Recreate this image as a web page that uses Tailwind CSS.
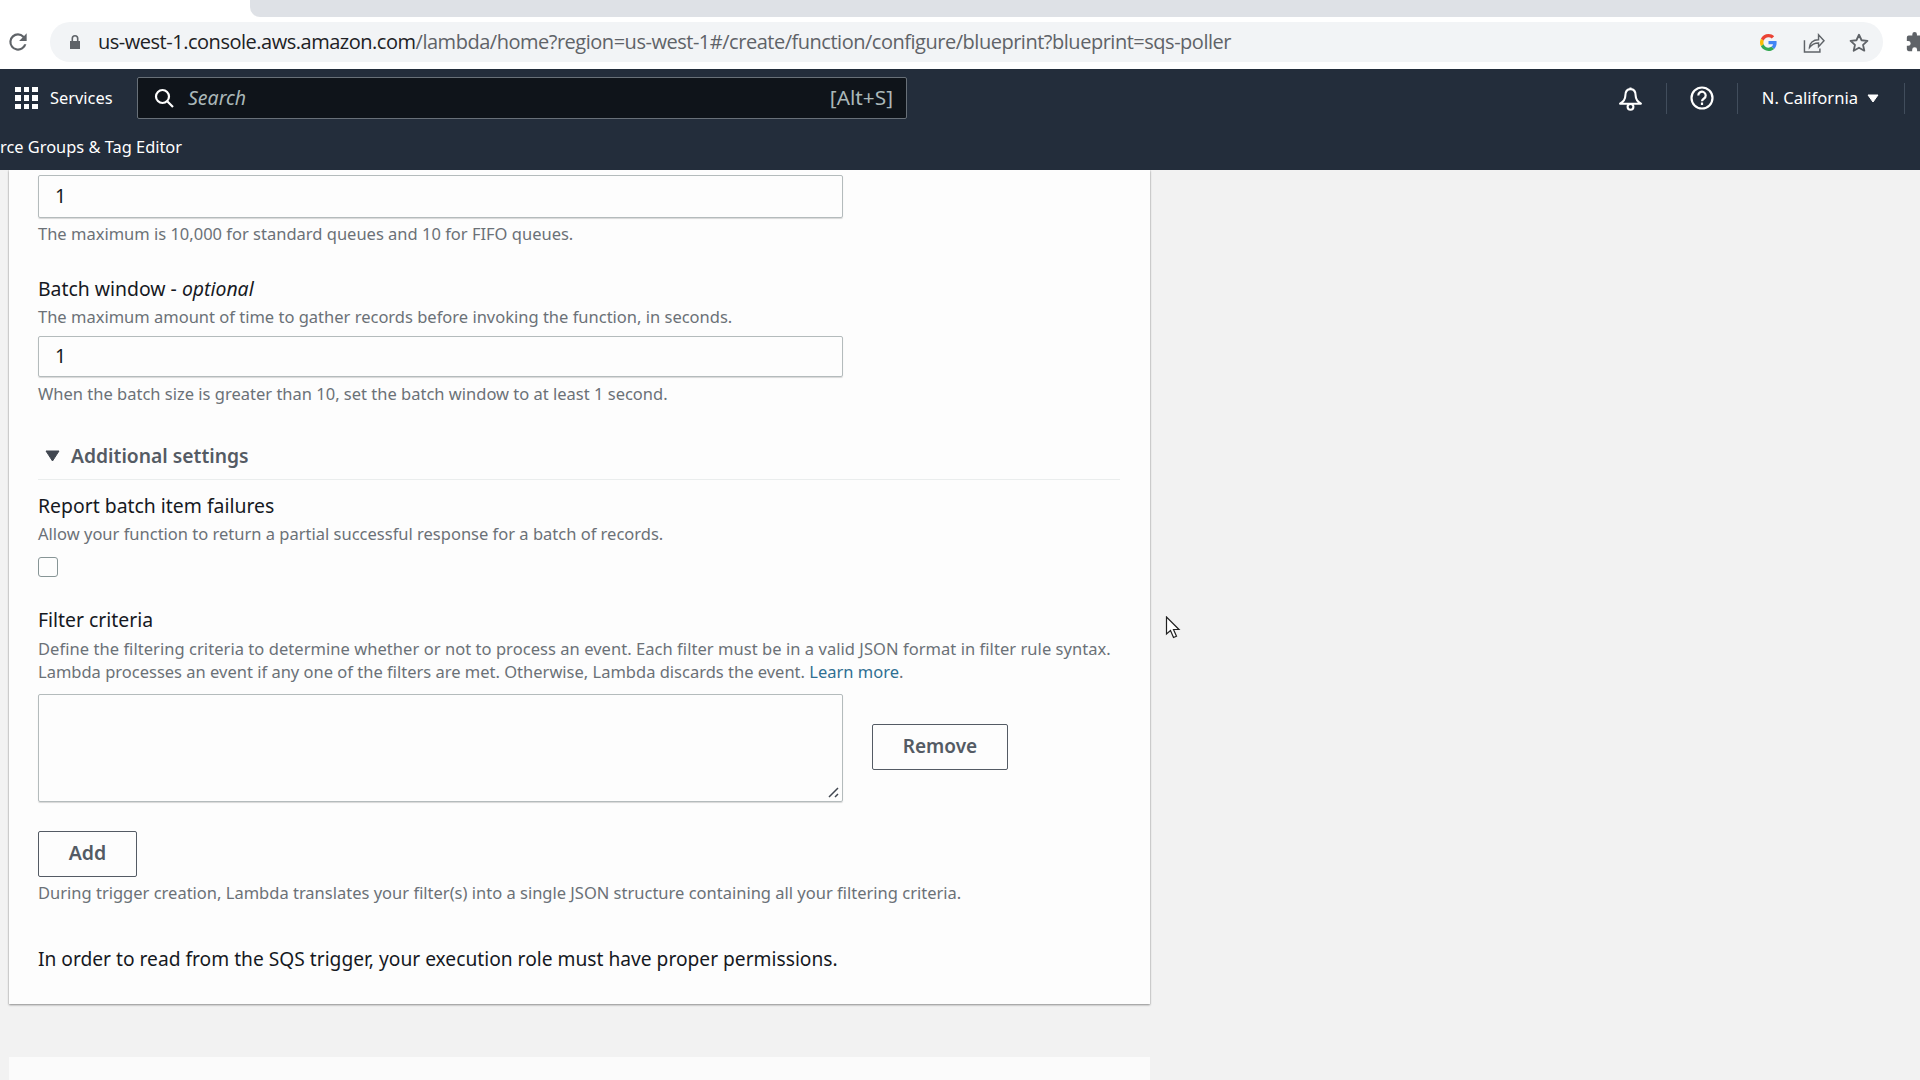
<!DOCTYPE html>
<html lang="en">
<head>
    <meta charset="UTF-8">
    <title>Create function - Lambda</title>
    <script src="https://cdn.jsdelivr.net/npm/@tailwindcss/browser@4"></script>
</head>
<body class="bg-[#f2f2f2] font-['Noto_Sans',sans-serif] text-[#16191f]">
<div class="relative h-[1080px] w-[1920px] overflow-hidden">
    <!-- Browser toolbar -->
    <div class="h-[69px] bg-white relative">
        <div class="h-[17px] ml-[250px] bg-[#dee1e6] rounded-bl-[10px]"></div>
        <div class="h-[52px] flex items-center">
            <svg class="w-[26px] h-[26px] ml-[5px] -mt-[2px]" viewBox="0 0 24 24" fill="#5f6368"><path d="M17.65 6.35A7.96 7.96 0 0 0 12 4a8 8 0 1 0 7.73 10h-2.08A6 6 0 1 1 12 6c1.66 0 3.14.69 4.22 1.78L13 11h7V4l-2.35 2.35z"/></svg>
            <div class="ml-[19px] mb-[3px] w-[1833px] h-[40px] bg-[#f2f4f6] rounded-[20px] flex items-center">
                <svg class="w-[14px] h-[16px] ml-[18px]" viewBox="0 0 14 16" fill="#5f6368"><path d="M3.5 7V4.5a3.5 3.5 0 0 1 7 0V7h1.500v8H2V7h1.500zm1.600 0h3.800V4.5a1.900 1.900 0 0 0-3.800 0V7z"/></svg>
                <div class="ml-[16px] text-[20px] leading-[28px] whitespace-nowrap text-[#5f6368] tracking-[-0.48px] font-['Open_Sans',sans-serif]"><span class="text-[#202124]">us-west-1.console.aws.amazon.com</span>/lambda/home?region=us-west-1#/create/function/configure/blueprint?blueprint=sqs-poller</div>
            </div>
            <svg class="absolute left-[1760px] top-[34px] w-[17px] h-[17px]" viewBox="0 0 48 48"><path fill="#EA4335" d="M24 9.500c3.500 0 6.700 1.300 9.200 3.400l6.800-6.800C35.900 2.400 30.300 0 24 0 14.600 0 6.500 5.400 2.600 13.200l7.900 6.100C12.400 13.700 17.700 9.500 24 9.500z"/><path fill="#4285F4" d="M46.900 24.500c0-1.600-.1-3.100-.4-4.500H24v9h12.900c-.6 3-2.200 5.500-4.700 7.200l7.700 6c4.400-4.100 7-10.200 7-17.700z"/><path fill="#FBBC05" d="M10.500 28.700a14.500 14.500 0 0 1 0-9.400l-7.900-6.100a24 24 0 0 0 0 21.600l7.900-6.100z"/><path fill="#34A853" d="M24 48c6.500 0 11.900-2.100 15.900-5.800l-7.700-6c-2.200 1.400-4.900 2.300-8.200 2.300-6.300 0-11.600-4.200-13.500-9.800l-7.900 6.100C6.500 42.600 14.600 48 24 48z"/></svg>
            <svg class="absolute left-[1803px] top-[33px] w-[22px] h-[20px]" viewBox="0 0 24 22" fill="none" stroke="#5f6368" stroke-width="1.600"><path d="M1.500 8v13h17v-4"/><path d="M7 16c0-5 4-8.500 10-8.500V2l6 6.500-6 6.500V11c-4 0-7.500 1.500-10 5z"/></svg>
            <svg class="absolute left-[1848px] top-[32px] w-[22px] h-[22px]" viewBox="0 0 24 24" fill="none" stroke="#5f6368" stroke-width="2" stroke-linejoin="round"><path d="M12 3l2.800 6 6.400.7-4.800 4.300 1.400 6.400L12 17.100 6.200 20.400l1.400-6.400-4.800-4.300 6.400-.7z"/></svg>
            <svg class="absolute left-[1905px] top-[31px] w-[22px] h-[22px]" viewBox="0 0 24 24" fill="#5f6368"><path d="M20.500 11H19V7a2 2 0 0 0-2-2h-4V3.500a2.500 2.500 0 0 0-5 0V5H4a2 2 0 0 0-2 2v3.800h1.500a2.700 2.700 0 0 1 0 5.400H2V20a2 2 0 0 0 2 2h3.800v-1.500a2.700 2.700 0 0 1 5.400 0V22H17a2 2 0 0 0 2-2v-4h1.500a2.500 2.500 0 0 0 0-5z"/></svg>
        </div>
    </div>

    <!-- AWS console header -->
    <header class="h-[101px] bg-[#232d3b] text-white relative z-10">
        <div class="h-[58px] flex items-center">
            <div class="ml-[15px] grid grid-cols-3 gap-[3px] w-[23px]">
                <i class="h-[5.500px] bg-white"></i><i class="h-[5.500px] bg-white"></i><i class="h-[5.500px] bg-white"></i>
                <i class="h-[5.500px] bg-white"></i><i class="h-[5.500px] bg-white"></i><i class="h-[5.500px] bg-white"></i>
                <i class="h-[5.500px] bg-white"></i><i class="h-[5.500px] bg-white"></i><i class="h-[5.500px] bg-white"></i>
            </div>
            <span class="ml-[12px] w-[87px] text-[16.400px]">Services</span>
            <div class="w-[770px] h-[42px] bg-[#0f141a] border border-[#687078] rounded-[2px] flex items-center">
                <svg class="ml-[15px] w-[22px] h-[22px]" viewBox="0 0 22 22" fill="none" stroke="#fff" stroke-width="2.200"><circle cx="9.500" cy="9.500" r="6.500"/><path d="M14.500 14.500l5.500 5.500"/></svg>
                <span class="ml-[13px] text-[19.500px] italic text-[#aab7b8]">Search</span>
                <span class="ml-auto mr-[13px] text-[20.800px] text-[#aab7b8]">[Alt+S]</span>
            </div>
            <div class="ml-auto flex items-center h-[31px] mr-[15px]">
                <svg class="w-[25px] h-[25px]" viewBox="0 0 24 24" fill="none" stroke="#fff" stroke-width="2" stroke-linejoin="round"><path d="M12 1.500v1.500M12 3c3.500 0 5 3 5 6.500 0 3 2 5.500 5 7.500H2c3-2 5-4.500 5-7.500C7 6 8.500 3 12 3z"/><circle cx="12" cy="20" r="2.800"/></svg>
                <i class="ml-[23px] w-px h-[31px] bg-[#414d5c]"></i>
                <svg class="ml-[23px] w-[24px] h-[24px]" viewBox="0 0 24 24" fill="none" stroke="#fff" stroke-width="2.200"><circle cx="12" cy="12" r="10.500"/><path d="M8.300 9.500a3.700 3.700 0 1 1 5.700 3c-1.300.8-2 1.400-2 2.800"/><path d="M12 16.500v2.500"/></svg>
                <i class="ml-[23px] w-px h-[31px] bg-[#414d5c]"></i>
                <span class="ml-[24px] text-[16.600px] whitespace-nowrap">N. California</span>
                <svg class="ml-[9px] w-[12px] h-[9px]" viewBox="0 0 12 9" fill="#fff" stroke="#fff" stroke-linejoin="round"><path d="M1 1h10L6 8z"/></svg>
                <i class="ml-[25px] w-px h-[31px] bg-[#414d5c]"></i>
            </div>
        </div>
        <div class="h-[43px] pt-[8px] text-[16.400px] whitespace-nowrap">rce Groups &amp; Tag Editor</div>
    </header>

    <!-- Trigger card -->
    <main class="ml-[9px] w-[1141px] h-[834px] bg-[#fdfdfd] shadow-[0_1px_2px_rgba(0,0,0,0.4),0_0_1px_rgba(0,0,0,0.2)] pl-[29px] pr-[30px] pt-[5px] overflow-hidden">
        <div class="w-[805px] h-[43px] pb-[2px] border border-[#b4bbbc] rounded-[2px] shadow-[0_1px_1px_rgba(0,0,0,0.15)] px-[16px] flex items-center text-[19.400px]">1</div>
        <p class="mt-[5px] h-[22px] leading-[22px] text-[16.500px] text-[#6b7177]">The maximum is 10,000 for standard queues and 10 for FIFO queues.</p>

        <p class="mt-[32px] h-[24px] leading-[24px] text-[19.400px]">Batch window - <em>optional</em></p>
        <p class="mt-[5px] h-[22px] leading-[22px] text-[16.500px] text-[#6b7177]">The maximum amount of time to gather records before invoking the function, in seconds.</p>
        <div class="mt-[8px] w-[805px] h-[41px] pb-[2px] border border-[#b4bbbc] rounded-[2px] shadow-[0_1px_1px_rgba(0,0,0,0.15)] px-[16px] flex items-center text-[19.400px]">1</div>
        <p class="mt-[6px] h-[22px] leading-[22px] text-[16.500px] text-[#6b7177]">When the batch size is greater than 10, set the batch window to at least 1 second.</p>

        <div class="mt-[39px] h-[24px] flex items-center text-[#545b64]">
            <svg class="ml-[7px] w-[15px] h-[12px]" viewBox="0 0 15 12" fill="#414750" stroke="#414750" stroke-linejoin="round"><path d="M1 1h13L7.500 11z"/></svg>
            <span class="ml-[11px] text-[19.300px] font-semibold">Additional settings</span>
        </div>
        <div class="mt-[11px] border-t border-[#eaeded]"></div>

        <p class="mt-[14px] h-[24px] leading-[24px] text-[19.400px]">Report batch item failures</p>
        <p class="mt-[5px] h-[22px] leading-[22px] text-[16.500px] text-[#6b7177]">Allow your function to return a partial successful response for a batch of records.</p>
        <div class="mt-[12px] w-[20px] h-[20px] border border-[#879596] rounded-[3px]"></div>

        <p class="mt-[31px] h-[24px] leading-[24px] text-[19.400px]">Filter criteria</p>
        <p class="mt-[5px] leading-[23px] text-[16.500px] text-[#6b7177] whitespace-nowrap"><span class="tracking-[0.05px]">Define the filtering criteria to determine whether or not to process an event. Each filter must be in a valid JSON format in filter rule syntax.</span><br>Lambda processes an event if any one of the filters are met. Otherwise, Lambda discards the event. <a class="text-[#2f6f92]">Learn more</a>.</p>

        <div class="mt-[11px] flex items-center">
            <div class="relative w-[805px] h-[108px] border border-[#b4bbbc] rounded-[2px] shadow-[0_1px_1px_rgba(0,0,0,0.15)]">
                <svg class="absolute right-[1px] bottom-[1px] w-[14px] h-[14px]" viewBox="0 0 14 14" stroke="#414750" stroke-width="1.500"><path d="M2 11L11 2M8 11l3-3"/></svg>
            </div>
            <button class="ml-[29px] -mt-[3px] w-[136px] h-[46px] border border-[#545b64] rounded-[2px] text-[19px] font-semibold text-[#545b64]">Remove</button>
        </div>

        <button class="block mt-[29px] pb-[3px] w-[99px] h-[46px] border border-[#545b64] rounded-[2px] text-[19.500px] font-semibold text-[#545b64]">Add</button>
        <p class="mt-[5px] h-[22px] leading-[22px] text-[16.500px] text-[#6b7177]">During trigger creation, Lambda translates your filter(s) into a single JSON structure containing all your filtering criteria.</p>

        <p class="mt-[43px] h-[24px] leading-[24px] text-[19.200px]">In order to read from the SQS trigger, your execution role must have proper permissions.</p>
    </main>

    <!-- Next card, cut off by the window -->
    <div class="ml-[9px] mt-[53px] w-[1141px] h-[40px] bg-[#fbfbfb]"></div>

    <!-- Mouse pointer -->
    <svg class="absolute left-[1165px] top-[616px] w-[16px] h-[24px]" viewBox="0 0 16 24" fill="#fff" stroke="#222" stroke-width="1.200"><path d="M1.500 1v17l4-3.500 3 7 3-1.300-3-6.700h5.500z"/></svg>
</div>
</body>
</html>
